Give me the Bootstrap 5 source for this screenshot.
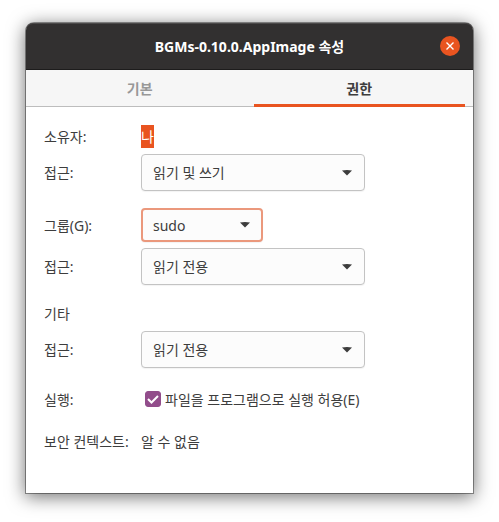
<!DOCTYPE html>
<html lang="ko">
<head>
<meta charset="utf-8">
<meta name="viewport" content="width=device-width, initial-scale=1">
<title>BGMs-0.10.0.AppImage 속성</title>
<link rel="stylesheet" href="https://cdn.jsdelivr.net/npm/bootstrap@5.3.0/dist/css/bootstrap.min.css">
<style>
  :root { --accent: #e95420; --ink: #3d3d3d; --line: #c3c3c3; }
  body { background: #fff; color: var(--ink); font: 14px/23px "Noto Sans", "Noto Sans CJK KR", sans-serif; padding: 23px 26px 29px; }
  .dialog { background: #fff; border-radius: 8px 8px 0 0; box-shadow: 0 0 0 1px rgba(0,0,0,.38), 0 3px 18px 1px rgba(0,0,0,.55); }
  .title-bar { display: grid; grid-template-columns: 1fr auto 1fr; height: 47px; padding: 0 13px; background: #323030; border-bottom: 1px solid #1d1c1c; border-radius: 7px 7px 0 0; box-shadow: inset 0 1px #4b4949; color: #fff; }
  .title-bar h1 { grid-column: 2; font-size: 14px; line-height: 23px; }
  .close-btn { width: 20px; height: 20px; background: var(--accent); }
  .tab-bar { gap: 8px; padding: 0 8px; height: 37px; background: #f6f6f6; box-shadow: inset 0 -1px #bdbdbd; }
  .tab-bar .nav-link { height: 37px; padding: 3px 0 0; border: 0; border-bottom: 3px solid transparent; background: none; color: #989898; font-weight: 700; }
  .tab-bar .nav-link.active { border-color: var(--accent); color: var(--ink); }
  .perm-form { display: grid; row-gap: 17px; padding: 18px 18px 40px; }
  .perm-group { display: grid; grid-template-columns: 85px 1fr; gap: 6px 12px; align-items: center; }
  .perm-group label { white-space: nowrap; }
  .owner { background: var(--accent); color: #fff; }
  .perm-group .form-select { width: 224px; max-width: 100%; height: 37px; padding: 0 32px 0 11px; border: 1px solid var(--line); border-radius: 4px; background: #fcfcfc url("data:image/svg+xml,%3Csvg xmlns='http://www.w3.org/2000/svg' viewBox='0 0 10 6'%3E%3Cpath d='M0 .5Q5-.3 10 .5L5 5.5Z' fill='%233d3d3d'/%3E%3C/svg%3E") no-repeat right 12px center / 10px 6px; color: var(--ink); font-size: 14px; line-height: 23px; box-shadow: 0 1px 1px rgba(0,0,0,.05); }
  .perm-group .group-select { width: 122px; height: 34px; padding-left: 10px; border: 2px solid #eb987c; background-position: right 11px center; }
  .exec-check { min-height: 28px; gap: 4px; padding: 0 0 0 4px; }
  .exec-check .form-check-input { width: 16px; height: 16px; margin: 0; flex: none; border-radius: 3px; }
  .exec-check .form-check-input:checked { border-color: #924d8b; background: #924d8b url("data:image/svg+xml,%3Csvg xmlns='http://www.w3.org/2000/svg' viewBox='0 0 14 14'%3E%3Cpath d='m2 7 3.5 3.5L12 4' fill='none' stroke='%23fff' stroke-width='2'/%3E%3C/svg%3E") center / 14px 14px no-repeat; }
</style>
</head>
<body>
<main class="dialog">
  <header class="title-bar align-items-center">
    <h1 class="mb-0 fw-bold">BGMs-0.10.0.AppImage 속성</h1>
    <button type="button" class="close-btn btn p-0 border-0 rounded-circle d-flex align-items-center justify-content-center ms-auto" aria-label="닫기">
      <svg width="8" height="8" viewBox="0 0 8 8" fill="none" stroke="#fff" stroke-width="1.4" aria-hidden="true"><path d="M.5.5l7 7M7.5.5l-7 7"/></svg>
    </button>
  </header>
  <nav class="tab-bar nav nav-justified flex-nowrap" role="tablist">
    <button type="button" class="nav-link flex-fill w-100" role="tab" aria-selected="false">기본</button>
    <button type="button" class="nav-link active flex-fill w-100" role="tab" aria-selected="true">권한</button>
  </nav>
  <form class="perm-form">
    <section class="perm-group">
      <span>소유자:</span><span class="owner justify-self-start me-auto">나</span>
      <label for="ownerAccess">접근:</label>
      <select id="ownerAccess" class="form-select"><option>읽기 및 쓰기</option></select>
    </section>
    <section class="perm-group">
      <label for="group">그룹(G):</label>
      <select id="group" class="form-select group-select"><option>sudo</option></select>
      <label for="groupAccess">접근:</label>
      <select id="groupAccess" class="form-select"><option>읽기 전용</option></select>
    </section>
    <section class="perm-group">
      <span>기타</span><span></span>
      <label for="otherAccess">접근:</label>
      <select id="otherAccess" class="form-select"><option>읽기 전용</option></select>
    </section>
    <section class="perm-group">
      <span>실행:</span>
      <div class="exec-check form-check d-flex align-items-center mb-0">
        <input id="exec" type="checkbox" class="form-check-input" checked>
        <label for="exec">파일을 프로그램으로 실행 허용(E)</label>
      </div>
    </section>
    <section class="perm-group">
      <span class="text-nowrap">보안 컨텍스트:</span><span>알 수 없음</span>
    </section>
  </form>
</main>
<script src="https://cdn.jsdelivr.net/npm/bootstrap@5.3.0/dist/js/bootstrap.bundle.min.js"></script>
</body>
</html>
